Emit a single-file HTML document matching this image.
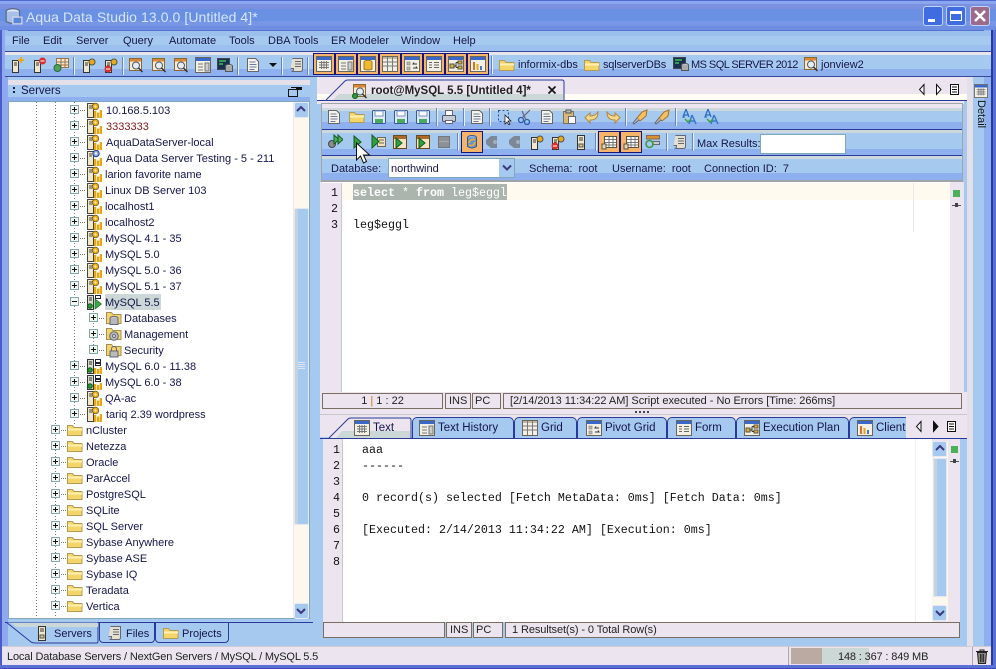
<!DOCTYPE html>
<html><head><meta charset="utf-8"><title>Aqua Data Studio</title>
<style>
html,body{margin:0;padding:0}
#w{position:relative;width:996px;height:669px;overflow:hidden;background:#a6c9ef;font:11px "Liberation Sans",sans-serif;color:#15154a}
#w div,#w svg,#w span{position:absolute}
.t{white-space:nowrap;line-height:16px;height:16px;margin-top:1px}
.b{left:0;height:1px}
.i{width:16px;height:16px}
.m{font:11.67px/16px "Liberation Mono",monospace;color:#111;white-space:pre;margin-top:1px}
.x{width:7px;height:7px;border:1px solid #7fa8a8;background:linear-gradient(#111,#111) center/5px 1px no-repeat,linear-gradient(#111,#111) center/1px 5px no-repeat,#f4f4f0}
.n{width:7px;height:7px;border:1px solid #7fa8a8;background:linear-gradient(#111,#111) center/5px 1px no-repeat,#f4f4f0}
.d{height:1px;width:5px;background:repeating-linear-gradient(90deg,#777 0 1px,transparent 1px 2px)}
.v{width:1px;background:repeating-linear-gradient(#777 0 1px,transparent 1px 3px)}
.s{width:1px;height:18px;background:#e8f0fa;border-left:1px solid #6a84b8}
.o{background:#f5b46a;border:1px solid #15157a;box-sizing:border-box;width:22px;height:22px}
.st{background:#ece5ef;border:1px solid #7a6e60;box-sizing:border-box;height:16px;line-height:14px;white-space:nowrap;color:#222;overflow:hidden}
.tab{height:21px;background:#a6c9ef;border:1px solid #2a3a98;border-bottom:0;border-radius:5px 5px 0 0;box-sizing:border-box;line-height:19px}
.sb{width:15px;height:16px;background:#a6c9ef;border:1px solid #e8e8f4;box-sizing:border-box;border-radius:2px;color:#3a3a7a}
</style></head><body>
<svg width="0" height="0" style="position:absolute"><defs>
<symbol id="srv" viewBox="0 0 16 16"><rect x="1.500" y="1.500" width="6" height="14" fill="#efe8cc" stroke="#444"/><path d="M3 4h3M3 6h3" stroke="#444"/><circle cx="9.500" cy="4.500" r="3.200" fill="#f0b020" stroke="#8a6818"/><circle cx="9.500" cy="4.500" r="1.100" fill="#fff6d0"/><path d="M8 9h2.300v7H8zM11 10.500h2.300V16H11zM13.700 8H16v8h-2.300z" fill="#eaa810"/></symbol>
<symbol id="srt" viewBox="0 0 16 16"><rect x="1.500" y="1.500" width="6" height="14" fill="#efe8cc" stroke="#444"/><path d="M3 4h3M3 6h3" stroke="#444"/><circle cx="10" cy="3.500" r="3.200" fill="#8aa8e0" stroke="#304080"/><circle cx="10" cy="3.500" r="1.100" fill="#fff"/><path d="M8 9h2.300v7H8zM11 10.500h2.300V16H11zM13.700 8H16v8h-2.300z" fill="#eaa810"/></symbol>
<symbol id="srn" viewBox="0 0 16 16"><rect x="1.500" y="1.500" width="6" height="14" fill="#d8dccc" stroke="#333"/><path d="M3 4h3M3 6h3" stroke="#333"/><circle cx="4" cy="12" r="2.300" fill="#2a9a3a" stroke="#145a20"/><rect x="9.500" y="1.500" width="5" height="3" fill="#fff" stroke="#223"/><rect x="9.500" y="5.500" width="5" height="2" fill="#fff" stroke="#223"/><path d="M8 10h2.300v6H8zM11 11h2.300v5H11zM13.700 9H16v7h-2.300z" fill="#eaa810"/></symbol>
<symbol id="sra" viewBox="0 0 16 16"><rect x="1.500" y="1.500" width="6" height="14" fill="#d8dccc" stroke="#333"/><path d="M3 4h3M3 6h3" stroke="#333"/><circle cx="4" cy="12" r="2.300" fill="#2a9a3a" stroke="#145a20"/><rect x="9.500" y="1.500" width="5" height="3" fill="#fff" stroke="#223"/><path d="M9 5v10l6.500-5z" fill="#3aa84a" stroke="#146a20" stroke-width=".7"/></symbol>
<symbol id="fol" viewBox="0 0 16 16"><path d="M.5 13.500V3.500h5l1.500 2h8v8z" fill="#f4d668" stroke="#b09a58"/><path d="M1 6.500h14v2H1z" fill="#fff0b0"/></symbol>
<symbol id="fdb" viewBox="0 0 16 16"><path d="M.5 13.500V2.500h5l1.500 2h8v9z" fill="#f4d668" stroke="#a09058"/><ellipse cx="8" cy="8" rx="4" ry="1.600" fill="#ccc" stroke="#667"/><path d="M4 8v6.500h8V8" fill="#b8b8bc" stroke="#667"/></symbol>
<symbol id="fgr" viewBox="0 0 16 16"><path d="M.5 13.500V2.500h5l1.500 2h8v9z" fill="#f4d668" stroke="#a09058"/><circle cx="8" cy="10" r="4.300" fill="#bbb" stroke="#667"/><circle cx="8" cy="10" r="1.500" fill="#eee" stroke="#667"/></symbol>
<symbol id="flk" viewBox="0 0 16 16"><path d="M.5 13.500V2.500h5l1.500 2h8v9z" fill="#f4d668" stroke="#a09058"/><path d="M5.500 9V7a2.500 2.500 0 0 1 5 0v2" fill="none" stroke="#667"/><rect x="4" y="9" width="8" height="6" fill="#bbb" stroke="#667"/></symbol>
<symbol id="win" viewBox="0 0 16 16"><rect x=".5" y=".5" width="15" height="15" fill="#f2efe4" stroke="#6a665c"/><path d="M1 1h14v3H1z" fill="#3a68c8"/><path d="M3 6.500h10M3 9h10M3 11.500h10M5.500 5v8M8 5v8M10.500 5v8" stroke="#77787c"/></symbol>
<symbol id="wi2" viewBox="0 0 16 16"><rect x=".5" y=".5" width="15" height="15" fill="#f2efe4" stroke="#6a665c"/><path d="M1 1h14v3H1z" fill="#3a68c8"/><path d="M3 7h5M3 10h5M3 13h5" stroke="#777"/><rect x="10" y="6" width="4" height="8" fill="#ccc" stroke="#777"/></symbol>
<symbol id="wic" viewBox="0 0 16 16"><rect x=".5" y=".5" width="15" height="15" fill="#f2efe4" stroke="#6a665c"/><path d="M1 1h14v3H1z" fill="#3a68c8"/><ellipse cx="8" cy="6" rx="4" ry="1.600" fill="#f4c848" stroke="#a07818"/><path d="M4 6v7q4 2 8 0V6" fill="#eeb830" stroke="#a07818"/></symbol>
<symbol id="wig" viewBox="0 0 16 16"><rect x=".5" y=".5" width="15" height="15" fill="#f2efe4" stroke="#6a665c"/><path d="M1 1h14v2H1z" fill="#c0b8a0"/><path d="M1 6h14M1 10h14M5.500 1v14M10.500 1v14" stroke="#77787c"/></symbol>
<symbol id="wip" viewBox="0 0 16 16"><rect x=".5" y=".5" width="15" height="15" fill="#f2efe4" stroke="#6a665c"/><path d="M1 1h14v3H1z" fill="#3a68c8"/><path d="M3 6h3v3H3zM3 11h3v3H3z" fill="#bbb" stroke="#777" stroke-width=".6"/><path d="M9 12h4l-1-1.500M13 8H9l1-1.500" fill="none" stroke="#334"/></symbol>
<symbol id="wif" viewBox="0 0 16 16"><rect x=".5" y=".5" width="15" height="15" fill="#f2efe4" stroke="#6a665c"/><path d="M1 1h14v3H1z" fill="#3a68c8"/><path d="M3 6.500h3M8 6.500h5M3 9h3M8 9h5M3 11.500h3M8 11.500h5" stroke="#666"/></symbol>
<symbol id="wie" viewBox="0 0 16 16"><rect x=".5" y=".5" width="15" height="15" fill="#f2efe4" stroke="#6a665c"/><path d="M1 1h14v3H1z" fill="#3a68c8"/><path d="M2 8h4v4H2zM10 5h4v3h-4zM10 10h4v3h-4z" fill="#dcb040" stroke="#554"/><path d="M6 10h2M8 6.500v5M8 6.500h2M8 11.500h2" stroke="#333"/></symbol>
<symbol id="wib" viewBox="0 0 16 16"><rect x=".5" y=".5" width="15" height="15" fill="#f2efe4" stroke="#6a665c"/><path d="M1 1h14v3H1z" fill="#3a68c8"/><path d="M3 6h2v8H3z" fill="#d87028"/><path d="M6.500 8h2v6h-2z" fill="#e0a820"/><path d="M10 10h2v4h-2z" fill="#4a78c0"/></symbol>
<symbol id="qry" viewBox="0 0 16 16"><rect x="1.500" y="1.500" width="12" height="12" fill="#f4ecd8" stroke="#8a6a30"/><path d="M2 2h11v2.500H2z" fill="#d88838"/><circle cx="8" cy="8.500" r="3.500" fill="#e4eef4" stroke="#556"/><path d="M10.500 11l4 4" stroke="#333" stroke-width="1.500"/></symbol>
<symbol id="qrg" viewBox="0 0 16 16"><use href="#qry"/><circle cx="3" cy="13" r="2.500" fill="#2a9a3a" stroke="#145a20"/></symbol>
<symbol id="tow" viewBox="0 0 16 16"><rect x="4.500" y="1.500" width="7" height="14" fill="#efe8cc" stroke="#333"/><path d="M6 4h4M6 6h4" stroke="#333"/><rect x="6" y="10" width="4" height="3" fill="#d8c890" stroke="#555"/></symbol>
<symbol id="tpl" viewBox="0 0 16 16"><rect x="3.500" y="3.500" width="6" height="12" fill="#efe8cc" stroke="#333"/><path d="M5 6h3M5 8h3" stroke="#333"/><path d="M12 0v6M9 3h6" stroke="#e8a820" stroke-width="2"/></symbol>
<symbol id="tmn" viewBox="0 0 16 16"><rect x="3.500" y="3.500" width="6" height="12" fill="#efe8cc" stroke="#333"/><path d="M5 6h3M5 8h3" stroke="#333"/><circle cx="11.500" cy="4" r="3.500" fill="#d83030"/><path d="M9.500 4h4" stroke="#fff"/></symbol>
<symbol id="tgd" viewBox="0 0 16 16"><rect x="3.500" y="1.500" width="12" height="9" fill="#f4ecd8" stroke="#a07040"/><path d="M4 5h11M4 8h11M8 2v8M12 2v8" stroke="#a07040"/><circle cx="4.500" cy="11" r="3.500" fill="#50a060" stroke="#2a6a3a"/></symbol>
<symbol id="tgr" viewBox="0 0 16 16"><rect x="2.500" y="3.500" width="6" height="12" fill="#efe8cc" stroke="#333"/><path d="M4 6h3M4 8h3" stroke="#333"/><circle cx="11" cy="5" r="3" fill="#e8a820" stroke="#554"/></symbol>
<symbol id="trd" viewBox="0 0 16 16"><use href="#tgr"/><circle cx="5" cy="12" r="3.500" fill="#d83030"/><path d="M3 12h4" stroke="#fff"/></symbol>
<symbol id="dbs" viewBox="0 0 16 16"><rect x=".5" y="1.500" width="12" height="11" fill="#1a3050" stroke="#445"/><path d="M2 4h7M2 7h4" stroke="#3ac050" stroke-width="1.500"/><ellipse cx="12" cy="9" rx="3.500" ry="1.500" fill="#ccc" stroke="#555"/><path d="M8.500 9v5.500h7V9" fill="#aaa" stroke="#555"/></symbol>
<symbol id="doc" viewBox="0 0 16 16"><path d="M2.500 1.500h8l3 3v10h-11z" fill="#f6f4ea" stroke="#666"/><path d="M4.500 5h6M4.500 7.500h7M4.500 10h7M4.500 12.500h5" stroke="#6a7a9a"/></symbol>
<symbol id="scr" viewBox="0 0 16 16"><path d="M3.500 1.500h10v11q0 2-2 2h-9q2 0 2-2v-1h-3" fill="#e4e0d0" stroke="#667"/><path d="M6 4.500h6M6 7h6M6 9.500h6" stroke="#667"/></symbol>
<symbol id="sav" viewBox="0 0 16 16"><rect x="1.500" y="1.500" width="13" height="13" rx="1" fill="#dfe8f6" stroke="#345a9a"/><rect x="4" y="2" width="8" height="5" fill="#fff" stroke="#7a94c0"/><rect x="4" y="10" width="8" height="4" fill="#4aa860"/></symbol>
<symbol id="pr" viewBox="0 0 16 16"><rect x="4.500" y="1.500" width="7" height="5" fill="#fff" stroke="#667"/><rect x="1.500" y="6.500" width="13" height="6" rx="1" fill="#c4ccd8" stroke="#556"/><rect x="4.500" y="11.500" width="7" height="3" fill="#fff" stroke="#667"/></symbol>
<symbol id="cut" viewBox="0 0 16 16"><circle cx="4" cy="11" r="2.500" fill="none" stroke="#2a5aa8" stroke-width="1.300"/><circle cx="10" cy="13" r="2.500" fill="none" stroke="#2a5aa8" stroke-width="1.300"/><path d="M5 9L13 1M9 11L5 2" stroke="#667" stroke-width="1.200"/></symbol>
<symbol id="pst" viewBox="0 0 16 16"><rect x="2.500" y="2.500" width="10" height="12" fill="#d8b878" stroke="#775"/><rect x="5" y="1" width="5" height="3" fill="#bbb" stroke="#555"/><rect x="7.500" y="7.500" width="7" height="7" fill="#fff" stroke="#667"/></symbol>
<symbol id="und" viewBox="0 0 16 16"><path d="M14 3c0 7-4 8-8 8V14L1 8.500 6 4v3c3 0 6-1 8-4z" fill="#f4d890" stroke="#b08838"/></symbol>
<symbol id="red" viewBox="0 0 16 16"><path d="M2 3c0 7 4 8 8 8V14l5-5.500L10 4v3C7 7 4 6 2 3z" fill="#f4d890" stroke="#b08838"/></symbol>
<symbol id="brs" viewBox="0 0 16 16"><path d="M15 1l-5 2-5 6 3 3 6-5z" fill="#f4c060" stroke="#a07030"/><path d="M5 9l-4 5 1 1 5-4" fill="#b8bcc0" stroke="#667"/></symbol>
<symbol id="fnt" viewBox="0 0 16 16"><path d="M4 0L1 8h2M4 0l3 8M2 6h4" fill="none" stroke="#2a6ac0" stroke-width="1.200"/><path d="M10 6l-3 9M10 6l4 9M8 12h5" fill="none" stroke="#3a78c8" stroke-width="1.500"/><path d="M3 10l3 3 3-3" fill="none" stroke="#3aa04a" stroke-width="1.500"/></symbol>
<symbol id="run" viewBox="0 0 16 16"><path d="M5 2v12l7-6z" fill="#30a040" stroke="#145a20"/></symbol>
<symbol id="rgr" viewBox="0 0 16 16"><circle cx="5" cy="10" r="3.500" fill="#8a8f8a" stroke="#445"/><path d="M7 1v9l5-4.500z" fill="#4ab060" stroke="#145a20"/><path d="M11 1v9l5-4.500z" fill="#4ab060" stroke="#145a20"/></symbol>
<symbol id="rpl" viewBox="0 0 16 16"><rect x="6.500" y="3.500" width="8" height="9" fill="#f4e4b0" stroke="#666"/><path d="M8 6h5M8 9h5" stroke="#666"/><path d="M1 1v13l7-6.500z" fill="#30a040" stroke="#145a20"/></symbol>
<symbol id="rgd" viewBox="0 0 16 16"><rect x="1.500" y="1.500" width="13" height="13" fill="#f4e4c0" stroke="#6a4a20"/><path d="M2 2h12v3H2z" fill="#b06a28"/><path d="M4 4v10l6-5z" fill="#30a040" stroke="#145a20"/></symbol>
<symbol id="stp" viewBox="0 0 16 16"><rect x="2.500" y="2.500" width="11" height="11" fill="#8c9098" stroke="#777"/><path d="M3 7.500h10" stroke="#aaa"/></symbol>
<symbol id="orf" viewBox="0 0 16 16"><ellipse cx="8" cy="3.500" rx="4.500" ry="2" fill="#9cb8e4" stroke="#345a9a"/><path d="M3.500 3.500v9q4.500 3 9 0v-9" fill="#6a94d0" stroke="#345a9a"/><path d="M5 9a4 4 0 0 1 6-3M11 8a4 4 0 0 1-6 3" fill="none" stroke="#f0b020" stroke-width="1.500"/></symbol>
<symbol id="gry" viewBox="0 0 16 16"><path d="M6 2h6v12H6l-5-4V6z" fill="#7c8898"/><circle cx="10" cy="8" r="2" fill="#a4aebc"/></symbol>
<symbol id="tbl" viewBox="0 0 16 16"><rect x="3.500" y="2.500" width="12" height="11" fill="#fff" stroke="#554"/><path d="M4 5.500h11M4 8.500h11M4 11h11M8 3v10M12 3v10" stroke="#777"/><path d="M1 10h4v5H1z" fill="#e8d8a8" stroke="#554"/></symbol>
<symbol id="pac" viewBox="0 0 16 16"><rect x="1.500" y="1.500" width="13" height="3.500" fill="#d8922c" stroke="#865"/><rect x="7.500" y="7.500" width="7" height="3" fill="#ccc" stroke="#667"/><circle cx="4.500" cy="10" r="3.500" fill="none" stroke="#3a9a4a" stroke-width="1.600"/></symbol>
</defs></svg>
<div id="w">
<!-- title -->
<div style="left:0;top:0;width:996px;height:31px;background:linear-gradient(#5068d0 0 1px,#8aa6ee 1px 4px,#7c90e0 4px 9px,#6a90e4 9px 21px,#7796e6 21px 26px,#6e8ee2 26px 30px,#5570d0 30px)"></div>
<svg class="i" style="left:5px;top:7px;width:18px;height:18px" viewBox="0 0 16 16"><ellipse cx="7" cy="4" rx="6" ry="2.500" fill="#dfe8f8" stroke="#567"/><path d="M1 4v9q6 3 12 0V4" fill="#a8c0e8" stroke="#567"/><rect x="7" y="9" width="8" height="6" fill="#5a88d8" stroke="#dde"/></svg>
<div class="t" style="left:26px;top:8px;font-size:14px;letter-spacing:.08px;color:#d8e6fa">Aqua Data Studio 13.0.0 [Untitled 4]*</div>
<div style="left:923px;top:6px;width:20px;height:20px;background:#3f6ce0;border:1px solid #c0d4f6;box-sizing:border-box;border-radius:3px"></div><div style="left:928px;top:19px;width:7px;height:3px;background:#fff"></div>
<div style="left:946px;top:6px;width:20px;height:20px;background:#3f6ce0;border:1px solid #c0d4f6;box-sizing:border-box;border-radius:3px"></div><div style="left:950px;top:11px;width:12px;height:10px;border:1px solid #fff;border-top-width:3px;box-sizing:border-box"></div>
<div style="left:970px;top:6px;width:20px;height:20px;background:#9c6a8c;border:1px solid #c0d4f6;box-sizing:border-box;border-radius:3px"></div>
<svg style="left:972px;top:8px;width:16px;height:16px" viewBox="0 0 16 16"><path d="M3 3l10 10M13 3L3 13" stroke="#fff" stroke-width="2.500"/></svg>
<!-- window edges -->
<div style="left:0;top:30px;width:8px;height:639px;background:linear-gradient(90deg,#4a5cc8 0 2px,#8fa8ee 2px)"></div>
<div style="left:967px;top:77px;width:6px;height:570px;background:#e4e0ea"></div>
<div style="left:984px;top:30px;width:7px;height:620px;background:#8fb0ee"></div>
<div style="left:991px;top:30px;width:5px;height:639px;background:linear-gradient(90deg,#2a3aa0 0 2px,#5a70d4 2px)"></div>
<!-- menu -->
<div style="left:5px;top:31px;width:986px;height:20px;background:linear-gradient(#9cc0ee 0 5px,#a6c9ef 5px 14px,#9cc0ee 14px)"></div>
<div style="left:5px;top:51px;width:986px;height:1px;background:#38489c"></div>
<div style="left:5px;top:52px;width:986px;height:3px;background:#e8e4ec"></div>
<div style="left:5px;top:55px;width:986px;height:21px;background:linear-gradient(#a6c9ef 0 14px,#8fb0ee 14px)"></div>
<div style="left:5px;top:76px;width:986px;height:1px;background:#38489c"></div>
<div class="t" style="left:12px;top:32px">File</div><div class="t" style="left:43px;top:32px">Edit</div><div class="t" style="left:76px;top:32px">Server</div><div class="t" style="left:123px;top:32px">Query</div><div class="t" style="left:169px;top:32px">Automate</div><div class="t" style="left:229px;top:32px">Tools</div><div class="t" style="left:268px;top:32px">DBA Tools</div><div class="t" style="left:331px;top:32px">ER Modeler</div><div class="t" style="left:401px;top:32px">Window</div><div class="t" style="left:453px;top:32px">Help</div>
<!-- main toolbar -->
<svg class="i" style="left:9px;top:57px"><use href="#tpl"/></svg><svg class="i" style="left:31px;top:57px"><use href="#tmn"/></svg><svg class="i" style="left:53px;top:57px"><use href="#tgd"/></svg>
<div class="s" style="left:73px;top:57px"></div>
<svg class="i" style="left:81px;top:57px"><use href="#tgr"/></svg><svg class="i" style="left:103px;top:57px"><use href="#trd"/></svg>
<div class="s" style="left:122px;top:57px"></div>
<svg class="i" style="left:128px;top:57px"><use href="#qry"/></svg><svg class="i" style="left:151px;top:57px"><use href="#qry"/></svg><svg class="i" style="left:173px;top:57px"><use href="#qry"/></svg><svg class="i" style="left:195px;top:57px"><use href="#wi2"/></svg><svg class="i" style="left:217px;top:57px"><use href="#dbs"/></svg>
<div class="s" style="left:237px;top:57px"></div>
<svg class="i" style="left:245px;top:57px"><use href="#doc"/></svg>
<div style="left:269px;top:63px;width:0;height:0;border:4px solid transparent;border-top:4px solid #111"></div>
<div class="s" style="left:281px;top:57px"></div>
<svg class="i" style="left:289px;top:57px"><use href="#scr"/></svg>
<div class="s" style="left:307px;top:57px"></div>
<div class="o" style="left:313px;top:53px"></div><div class="o" style="left:335px;top:53px"></div><div class="o" style="left:357px;top:53px"></div><div class="o" style="left:379px;top:53px"></div><div class="o" style="left:401px;top:53px"></div><div class="o" style="left:423px;top:53px"></div><div class="o" style="left:445px;top:53px"></div><div class="o" style="left:467px;top:53px"></div>
<svg class="i" style="left:316px;top:56px"><use href="#win"/></svg><svg class="i" style="left:338px;top:56px"><use href="#wi2"/></svg><svg class="i" style="left:360px;top:56px"><use href="#wic"/></svg><svg class="i" style="left:382px;top:56px"><use href="#wig"/></svg><svg class="i" style="left:404px;top:56px"><use href="#wip"/></svg><svg class="i" style="left:426px;top:56px"><use href="#wif"/></svg><svg class="i" style="left:448px;top:56px"><use href="#wie"/></svg><svg class="i" style="left:470px;top:56px"><use href="#wib"/></svg>
<div class="s" style="left:491px;top:56px"></div>
<svg class="i" style="left:499px;top:57px"><use href="#fol"/></svg><div class="t" style="left:518px;top:56px">informix-dbs</div>
<svg class="i" style="left:584px;top:57px"><use href="#fol"/></svg><div class="t" style="left:603px;top:56px;letter-spacing:-.2px">sqlserverDBs</div>
<svg class="i" style="left:673px;top:56px"><use href="#dbs"/></svg><div class="t" style="left:691px;top:56px;letter-spacing:-.55px">MS SQL SERVER 2012</div>
<svg class="i" style="left:803px;top:56px"><use href="#qry"/></svg><div class="t" style="left:821px;top:56px">jonview2</div>
<!-- left panel -->
<div style="left:8px;top:80px;width:302px;height:5px;background:#e4e0ea"></div>
<div style="left:8px;top:85px;width:302px;height:12px;background:#a6c9ef"></div>
<div style="left:8px;top:97px;width:302px;height:4px;background:#8fb0ee"></div>
<div style="left:13px;top:87px;width:2px;height:2px;background:#223;box-shadow:0 4px 0 #223"></div>
<div class="t" style="left:21px;top:82px;font-size:11.500px">Servers</div>
<div style="left:288px;top:89px;width:8px;height:6px;border:1px solid #111"></div><div style="left:291px;top:87px;width:6px;height:1px;background:#111;box-shadow:5px 0 0 #111,5px 1px 0 #111,5px 2px 0 #111"></div>
<div style="left:8px;top:101px;width:302px;height:518px;background:#fff;border:1px solid #7fa8b8;box-sizing:border-box;overflow:hidden" id="tree"></div>
<div style="left:293px;top:102px;width:15px;height:516px;background:#fdf8ee;border-left:1px solid #ece8ec;box-sizing:border-box"></div>
<div class="sb" style="left:294px;top:102px"></div><svg style="left:296px;top:105px;width:10px;height:8px" viewBox="0 0 10 8"><path d="M1 6l4-4 4 4" fill="none" stroke="#3a3a7a" stroke-width="2"/></svg>
<div style="left:294px;top:208px;width:15px;height:317px;background:linear-gradient(90deg,#c4d4dc 0 3px,#a6c9ef 3px);border:1px solid #e4e6f2;box-sizing:border-box;border-radius:2px"></div>
<div style="left:298px;top:362px;width:7px;height:1px;background:#dce4f4;box-shadow:0 2px 0 #dce4f4,0 4px 0 #dce4f4,0 6px 0 #dce4f4"></div>
<div class="sb" style="left:294px;top:603px"></div><svg style="left:296px;top:607px;width:10px;height:8px" viewBox="0 0 10 8"><path d="M1 2l4 4 4-4" fill="none" stroke="#3a3a7a" stroke-width="2"/></svg>
<!-- tree lines -->
<div class="v" style="left:36px;top:102px;height:516px"></div><div class="v" style="left:55px;top:102px;height:516px"></div><div class="v" style="left:74px;top:102px;height:322px"></div><div class="v" style="left:93px;top:308px;height:44px"></div>
<!-- tree rows level 2 -->
<div class="x" style="left:70px;top:105px"></div><div class="d" style="left:80px;top:110px"></div><svg class="i" style="left:86px;top:102px"><use href="#srv"/></svg><div class="t" style="left:106px;top:102px">10.168.5.103</div>
<div class="x" style="left:70px;top:121px"></div><div class="d" style="left:80px;top:126px"></div><svg class="i" style="left:86px;top:118px"><use href="#srv"/></svg><div class="t" style="left:106px;top:118px;color:#7a1a1a">3333333</div>
<div class="x" style="left:70px;top:137px"></div><div class="d" style="left:80px;top:142px"></div><svg class="i" style="left:86px;top:134px"><use href="#srv"/></svg><div class="t" style="left:106px;top:134px">AquaDataServer-local</div>
<div class="x" style="left:70px;top:153px"></div><div class="d" style="left:80px;top:158px"></div><svg class="i" style="left:86px;top:150px"><use href="#srt"/></svg><div class="t" style="left:106px;top:150px">Aqua Data Server Testing - 5 - 211</div>
<div class="x" style="left:70px;top:169px"></div><div class="d" style="left:80px;top:174px"></div><svg class="i" style="left:86px;top:166px"><use href="#srv"/></svg><div class="t" style="left:105px;top:166px">larion favorite name</div>
<div class="x" style="left:70px;top:185px"></div><div class="d" style="left:80px;top:190px"></div><svg class="i" style="left:86px;top:182px"><use href="#srv"/></svg><div class="t" style="left:105px;top:182px">Linux DB Server 103</div>
<div class="x" style="left:70px;top:201px"></div><div class="d" style="left:80px;top:206px"></div><svg class="i" style="left:86px;top:198px"><use href="#srv"/></svg><div class="t" style="left:105px;top:198px">localhost1</div>
<div class="x" style="left:70px;top:217px"></div><div class="d" style="left:80px;top:222px"></div><svg class="i" style="left:86px;top:214px"><use href="#srv"/></svg><div class="t" style="left:105px;top:214px">localhost2</div>
<div class="x" style="left:70px;top:233px"></div><div class="d" style="left:80px;top:238px"></div><svg class="i" style="left:86px;top:230px"><use href="#srv"/></svg><div class="t" style="left:105px;top:230px">MySQL 4.1 - 35</div>
<div class="x" style="left:70px;top:249px"></div><div class="d" style="left:80px;top:254px"></div><svg class="i" style="left:86px;top:246px"><use href="#srv"/></svg><div class="t" style="left:105px;top:246px">MySQL 5.0</div>
<div class="x" style="left:70px;top:265px"></div><div class="d" style="left:80px;top:270px"></div><svg class="i" style="left:86px;top:262px"><use href="#srv"/></svg><div class="t" style="left:105px;top:262px">MySQL 5.0 - 36</div>
<div class="x" style="left:70px;top:281px"></div><div class="d" style="left:80px;top:286px"></div><svg class="i" style="left:86px;top:278px"><use href="#srv"/></svg><div class="t" style="left:105px;top:278px">MySQL 5.1 - 37</div>
<div class="n" style="left:70px;top:297px"></div><div class="d" style="left:80px;top:302px"></div><svg class="i" style="left:86px;top:294px"><use href="#sra"/></svg><div style="left:105px;top:294px;width:56px;height:16px;background:#ccd8d8"></div><div class="t" style="left:105px;top:294px">MySQL 5.5</div>
<div class="x" style="left:89px;top:313px"></div><div class="d" style="left:99px;top:318px"></div><svg class="i" style="left:106px;top:310px"><use href="#fdb"/></svg><div class="t" style="left:124px;top:310px">Databases</div>
<div class="x" style="left:89px;top:329px"></div><div class="d" style="left:99px;top:334px"></div><svg class="i" style="left:106px;top:326px"><use href="#fgr"/></svg><div class="t" style="left:124px;top:326px">Management</div>
<div class="x" style="left:89px;top:345px"></div><div class="d" style="left:99px;top:350px"></div><svg class="i" style="left:106px;top:342px"><use href="#flk"/></svg><div class="t" style="left:124px;top:342px">Security</div>
<div class="x" style="left:70px;top:361px"></div><div class="d" style="left:80px;top:366px"></div><svg class="i" style="left:86px;top:358px"><use href="#srn"/></svg><div class="t" style="left:105px;top:358px">MySQL 6.0 - 11.38</div>
<div class="x" style="left:70px;top:377px"></div><div class="d" style="left:80px;top:382px"></div><svg class="i" style="left:86px;top:374px"><use href="#srn"/></svg><div class="t" style="left:105px;top:374px">MySQL 6.0 - 38</div>
<div class="x" style="left:70px;top:393px"></div><div class="d" style="left:80px;top:398px"></div><svg class="i" style="left:86px;top:390px"><use href="#srv"/></svg><div class="t" style="left:105px;top:390px">QA-ac</div>
<div class="x" style="left:70px;top:409px"></div><div class="d" style="left:80px;top:414px"></div><svg class="i" style="left:86px;top:406px"><use href="#srv"/></svg><div class="t" style="left:106px;top:406px">tariq 2.39 wordpress</div>
<!-- tree rows level 1 -->
<div class="x" style="left:51px;top:425px"></div><div class="d" style="left:61px;top:430px"></div><svg class="i" style="left:67px;top:422px"><use href="#fol"/></svg><div class="t" style="left:86px;top:422px">nCluster</div>
<div class="x" style="left:51px;top:441px"></div><div class="d" style="left:61px;top:446px"></div><svg class="i" style="left:67px;top:438px"><use href="#fol"/></svg><div class="t" style="left:86px;top:438px">Netezza</div>
<div class="x" style="left:51px;top:457px"></div><div class="d" style="left:61px;top:462px"></div><svg class="i" style="left:67px;top:454px"><use href="#fol"/></svg><div class="t" style="left:86px;top:454px">Oracle</div>
<div class="x" style="left:51px;top:473px"></div><div class="d" style="left:61px;top:478px"></div><svg class="i" style="left:67px;top:470px"><use href="#fol"/></svg><div class="t" style="left:86px;top:470px">ParAccel</div>
<div class="x" style="left:51px;top:489px"></div><div class="d" style="left:61px;top:494px"></div><svg class="i" style="left:67px;top:486px"><use href="#fol"/></svg><div class="t" style="left:86px;top:486px">PostgreSQL</div>
<div class="x" style="left:51px;top:505px"></div><div class="d" style="left:61px;top:510px"></div><svg class="i" style="left:67px;top:502px"><use href="#fol"/></svg><div class="t" style="left:86px;top:502px">SQLite</div>
<div class="x" style="left:51px;top:521px"></div><div class="d" style="left:61px;top:526px"></div><svg class="i" style="left:67px;top:518px"><use href="#fol"/></svg><div class="t" style="left:86px;top:518px">SQL Server</div>
<div class="x" style="left:51px;top:537px"></div><div class="d" style="left:61px;top:542px"></div><svg class="i" style="left:67px;top:534px"><use href="#fol"/></svg><div class="t" style="left:86px;top:534px">Sybase Anywhere</div>
<div class="x" style="left:51px;top:553px"></div><div class="d" style="left:61px;top:558px"></div><svg class="i" style="left:67px;top:550px"><use href="#fol"/></svg><div class="t" style="left:86px;top:550px">Sybase ASE</div>
<div class="x" style="left:51px;top:569px"></div><div class="d" style="left:61px;top:574px"></div><svg class="i" style="left:67px;top:566px"><use href="#fol"/></svg><div class="t" style="left:86px;top:566px">Sybase IQ</div>
<div class="x" style="left:51px;top:585px"></div><div class="d" style="left:61px;top:590px"></div><svg class="i" style="left:67px;top:582px"><use href="#fol"/></svg><div class="t" style="left:86px;top:582px">Teradata</div>
<div class="x" style="left:51px;top:601px"></div><div class="d" style="left:61px;top:606px"></div><svg class="i" style="left:67px;top:598px"><use href="#fol"/></svg><div class="t" style="left:86px;top:598px">Vertica</div>
<!-- left bottom tabs -->
<div style="left:8px;top:619px;width:305px;height:27px;background:#a6c9ef"></div>
<div style="left:5px;top:622px;width:308px;height:1px;background:#2a3a98"></div>
<svg style="left:5px;top:622px;width:94px;height:22px" viewBox="0 0 94 22"><path d="M1 0L26 20q2 1 4 1h62q1 0 1-2V0z" fill="#a6c9ef" stroke="#2a3a98"/><path d="M6 1h87v4H12z" fill="#ccd8d8"/></svg>
<svg class="i" style="left:34px;top:625px"><use href="#tow"/></svg><div class="t" style="left:54px;top:625px">Servers</div>
<div style="left:99px;top:623px;width:56px;height:20px;background:#a6c9ef;border:1px solid #2a3a98;border-top:0;border-radius:0 0 4px 4px;box-sizing:border-box"></div>
<svg class="i" style="left:107px;top:625px"><use href="#scr"/></svg><div class="t" style="left:126px;top:625px">Files</div>
<div style="left:155px;top:623px;width:74px;height:20px;background:#a6c9ef;border:1px solid #2a3a98;border-top:0;border-radius:0 0 4px 4px;box-sizing:border-box"></div>
<svg class="i" style="left:163px;top:625px"><use href="#fol"/></svg><div class="t" style="left:182px;top:625px">Projects</div>
<!-- right pane -->
<div style="left:317px;top:77px;width:650px;height:17px;background:#ece5ef"></div>
<div style="left:317px;top:94px;width:650px;height:6px;background:#fffdf4"></div>
<div style="left:317px;top:100px;width:650px;height:1px;background:#2a3a98"></div>
<div style="left:317px;top:101px;width:650px;height:3px;background:#ece5ef"></div>
<svg style="left:325px;top:79px;width:241px;height:22px" viewBox="0 0 241 22"><path d="M1 21L20 2q1-1 3-1h214q2 0 2 2v18" fill="#ece5ef" stroke="#2a3a98"/><path d="M14 15h224v6H8z" fill="#ccd8d8"/></svg>
<svg class="i" style="left:352px;top:83px"><use href="#qrg"/></svg>
<div class="t" style="left:371px;top:82px;font-weight:bold;font-size:11.500px;color:#222">root@MySQL 5.5 [Untitled 4]*</div>
<svg style="left:547px;top:85px;width:10px;height:10px" viewBox="0 0 10 10"><path d="M1.500 1.500l7 7M8.500 1.500l-7 7" stroke="#111" stroke-width="1.600"/></svg>
<svg style="left:918px;top:83px;width:46px;height:13px" viewBox="0 0 46 13"><path d="M6 1.500L1.500 6.500 6 11.500zM18.500 1.500L23 6.500 18.500 11.500z" fill="#fff" stroke="#111"/><rect x="32.500" y="1.500" width="8" height="10" fill="#fff" stroke="#111"/><path d="M34 4h5M34 6.500h5M34 9h5" stroke="#111"/></svg>
<!-- editor toolbars -->
<div style="left:321px;top:103px;width:642px;height:79px;background:#8fb0ee;border:1px solid #a0a4a8;border-bottom-width:2px;box-sizing:border-box"></div>
<div style="left:322px;top:104px;width:640px;height:25px;background:linear-gradient(#ece5ef 0 4px,#ccd8dc 4px 7px,#a6c9ef 7px 18px,#8fb0ee 18px)"></div>
<div style="left:322px;top:129px;width:640px;height:1px;background:#2a3a98"></div>
<div style="left:322px;top:130px;width:640px;height:25px;background:linear-gradient(#ccd8dc 0 3px,#a6c9ef 3px 19px,#8fb0ee 19px)"></div>
<div style="left:322px;top:155px;width:640px;height:1px;background:#2a3a98"></div>
<div style="left:322px;top:156px;width:640px;height:24px;background:linear-gradient(#ccd8dc 0 3px,#a6c9ef 3px 17px,#8fb0ee 17px)"></div>
<svg class="i" style="left:326px;top:109px"><use href="#doc"/></svg><svg class="i" style="left:349px;top:109px"><use href="#fol"/></svg><svg class="i" style="left:371px;top:109px"><use href="#sav"/></svg><svg class="i" style="left:393px;top:109px"><use href="#sav"/></svg><svg class="i" style="left:415px;top:109px"><use href="#sav"/></svg>
<div class="s" style="left:436px;top:108px"></div>
<svg class="i" style="left:441px;top:109px"><use href="#pr"/></svg>
<div class="s" style="left:463px;top:108px"></div>
<svg class="i" style="left:469px;top:109px"><use href="#doc"/></svg>
<div class="s" style="left:489px;top:108px"></div>
<svg style="left:497px;top:109px;width:16px;height:16px" viewBox="0 0 16 16"><rect x="1.500" y="1.500" width="10" height="11" fill="none" stroke="#2a4a9a" stroke-dasharray="2 2"/><path d="M8 6v9l2-2 2 3 1-1-2-3h3z" fill="#fff" stroke="#111" stroke-width=".7"/></svg>
<svg class="i" style="left:517px;top:109px"><use href="#cut"/></svg><svg class="i" style="left:539px;top:109px"><use href="#doc"/></svg><svg class="i" style="left:561px;top:109px"><use href="#pst"/></svg><svg class="i" style="left:584px;top:109px"><use href="#und"/></svg><svg class="i" style="left:605px;top:109px"><use href="#red"/></svg>
<div class="s" style="left:625px;top:108px"></div>
<svg class="i" style="left:632px;top:109px"><use href="#brs"/></svg><svg class="i" style="left:654px;top:109px"><use href="#brs"/></svg>
<div class="s" style="left:675px;top:108px"></div>
<svg class="i" style="left:682px;top:109px"><use href="#fnt"/></svg><svg class="i" style="left:704px;top:109px"><use href="#fnt"/></svg>
<svg class="i" style="left:327px;top:134px"><use href="#rgr"/></svg><svg class="i" style="left:349px;top:134px"><use href="#run"/></svg><svg class="i" style="left:371px;top:134px"><use href="#rpl"/></svg><svg class="i" style="left:392px;top:134px"><use href="#rgd"/></svg><svg class="i" style="left:415px;top:134px"><use href="#rgd"/></svg><svg class="i" style="left:436px;top:134px"><use href="#stp"/></svg>
<div class="s" style="left:457px;top:133px"></div>
<div class="o" style="left:461px;top:131px"></div><svg class="i" style="left:464px;top:134px"><use href="#orf"/></svg>
<svg class="i" style="left:485px;top:134px"><use href="#gry"/></svg><svg class="i" style="left:508px;top:134px"><use href="#gry"/></svg><svg class="i" style="left:529px;top:134px"><use href="#tgr"/></svg><svg class="i" style="left:550px;top:134px"><use href="#trd"/></svg><svg class="i" style="left:573px;top:134px"><use href="#tow"/></svg>
<div class="s" style="left:595px;top:133px"></div>
<div class="o" style="left:598px;top:131px"></div><div class="o" style="left:620px;top:131px"></div><svg class="i" style="left:601px;top:134px"><use href="#tbl"/></svg><svg class="i" style="left:623px;top:134px"><use href="#tbl"/></svg>
<svg class="i" style="left:645px;top:134px"><use href="#pac"/></svg>
<div class="s" style="left:666px;top:133px"></div>
<svg class="i" style="left:672px;top:134px"><use href="#scr"/></svg>
<div class="s" style="left:692px;top:133px"></div>
<div class="t" style="left:697px;top:135px">Max Results:</div>
<div style="left:760px;top:134px;width:86px;height:20px;background:#fff;border:1px solid #7fa8b8;box-sizing:border-box"></div>
<div class="t" style="left:331px;top:160px">Database:</div>
<div style="left:388px;top:158px;width:127px;height:20px;background:#fff;border:1px solid #7fa8b8;box-sizing:border-box"></div>
<div class="t" style="left:391px;top:160px">northwind</div>
<div style="left:499px;top:159px;width:15px;height:18px;background:#a6c9ef"></div>
<svg style="left:502px;top:164px;width:10px;height:8px" viewBox="0 0 10 8"><path d="M1 1.500l4 4 4-4" fill="none" stroke="#3a3a7a" stroke-width="2"/></svg>
<div class="t" style="left:529px;top:160px">Schema:&nbsp; root</div><div class="t" style="left:612px;top:160px">Username:&nbsp; root</div><div class="t" style="left:704px;top:160px">Connection ID:&nbsp; 7</div>
<!-- editor -->
<div style="left:320px;top:182px;width:647px;height:210px;background:#fff"></div>
<div style="left:320px;top:182px;width:2px;height:210px;background:#ece5ef"></div>
<div style="left:322px;top:183px;width:19px;height:209px;background:#ece5ef"></div>
<div style="left:341px;top:183px;width:1px;height:209px;background:#c8c8cc"></div>
<div style="left:342px;top:183px;width:608px;height:17px;background:#fffaf0"></div>
<div style="left:913px;top:183px;width:1px;height:49px;background:#e8e8e8"></div>
<div style="left:950px;top:182px;width:14px;height:210px;background:#ece5ef"></div>
<div style="left:964px;top:101px;width:3px;height:546px;background:#a6c9ef"></div>
<div style="left:953px;top:190px;width:7px;height:7px;background:#4caf5a"></div>
<div style="left:952px;top:205px;width:9px;height:1px;background:#555"></div><div style="left:955px;top:203px;width:3px;height:4px;background:#444"></div>
<div class="m" style="left:331px;top:184px">1</div><div class="m" style="left:331px;top:200px">2</div><div class="m" style="left:331px;top:216px">3</div>
<div style="left:353px;top:184px;width:154px;height:16px;background:#abb5ad"></div>
<div class="m" style="left:353px;top:184px;color:#fff"><b>select</b> * <b>from</b> leg$eggl</div>
<div class="m" style="left:353px;top:216px">leg$eggl</div>
<!-- cursor -->
<svg style="left:355px;top:142px;width:16px;height:22px" viewBox="0 0 16 22"><path d="M1.500 1v17l4-4 3 7 3-1.500-3-6.500h6z" fill="#fff" stroke="#111"/></svg>
<!-- status 1 -->
<div style="left:320px;top:392px;width:647px;height:22px;background:#ece5ef"></div>
<div class="st" style="left:322px;top:393px;width:121px;text-align:center">1 <span style="position:static;color:#c87818">|</span> 1 : 22</div>
<div class="st" style="left:445px;top:393px;width:26px;padding-left:3px">INS</div>
<div class="st" style="left:472px;top:393px;width:29px;padding-left:2px">PC</div>
<div class="st" style="left:503px;top:393px;width:459px;padding-left:6px;letter-spacing:-.03px">[2/14/2013 11:34:22 AM] Script executed - No Errors [Time: 266ms]</div>
<div style="left:635px;top:411px;width:2px;height:2px;background:#445;box-shadow:4px 0 0 #445,8px 0 0 #445,12px 0 0 #445"></div>
<div style="left:320px;top:414px;width:647px;height:1px;background:#c8c8cc"></div>
<div style="left:320px;top:415px;width:647px;height:24px;background:#ece5ef"></div>
<div style="left:320px;top:437px;width:586px;height:2px;background:#a6c9ef"></div>
<!-- result tabs -->
<div class="tab" style="left:412px;top:417px;width:102px"></div><div class="tab" style="left:514px;top:417px;width:63px"></div><div class="tab" style="left:577px;top:417px;width:90px"></div><div class="tab" style="left:667px;top:417px;width:69px"></div><div class="tab" style="left:736px;top:417px;width:113px"></div><div class="tab" style="left:849px;top:417px;width:57px;border-right:0;border-radius:5px 0 0 0"></div>
<svg style="left:328px;top:417px;width:85px;height:22px" viewBox="0 0 85 22"><path d="M1 21L20 2q1-1 3-1h58q2 0 2 2v18" fill="#ece5ef" stroke="#2a3a98"/><path d="M14 14h68v7H8z" fill="#ccd8d8"/></svg>
<div style="left:320px;top:438px;width:647px;height:1px;background:#2a3a98"></div>
<svg class="i" style="left:354px;top:420px"><use href="#win"/></svg><div class="t" style="left:373px;top:419px;font-size:11.500px">Text</div>
<svg class="i" style="left:419px;top:420px"><use href="#wi2"/></svg><div class="t" style="left:438px;top:419px;font-size:11.500px">Text History</div>
<svg class="i" style="left:522px;top:420px"><use href="#wig"/></svg><div class="t" style="left:541px;top:419px;font-size:11.500px">Grid</div>
<svg class="i" style="left:586px;top:420px"><use href="#wip"/></svg><div class="t" style="left:605px;top:419px;font-size:11.500px">Pivot Grid</div>
<svg class="i" style="left:676px;top:420px"><use href="#wif"/></svg><div class="t" style="left:695px;top:419px;font-size:11.500px">Form</div>
<svg class="i" style="left:744px;top:420px"><use href="#wie"/></svg><div class="t" style="left:763px;top:419px;font-size:11.500px">Execution Plan</div>
<svg class="i" style="left:857px;top:420px"><use href="#wib"/></svg><div class="t" style="left:876px;top:419px;font-size:11.500px">Client</div>
<svg style="left:915px;top:420px;width:46px;height:13px" viewBox="0 0 46 13"><path d="M6 1.500L1.500 6.500 6 11.500z" fill="#fff" stroke="#111"/><path d="M18.500 1.500L23 6.500 18.500 11.500z" fill="#111" stroke="#111"/><rect x="32.500" y="1.500" width="8" height="10" fill="#fff" stroke="#111"/><path d="M34 4h5M34 6.500h5M34 9h5" stroke="#111"/></svg>
<!-- results -->
<div style="left:323px;top:439px;width:637px;height:183px;background:#fff"></div>
<div style="left:320px;top:439px;width:3px;height:183px;background:#a6c9ef"></div>
<div style="left:323px;top:439px;width:20px;height:183px;background:#ece5ef;border-right:1px solid #c8c8cc;box-sizing:border-box"></div>
<div style="left:915px;top:439px;width:1px;height:183px;background:#eee"></div>
<div style="left:932px;top:439px;width:28px;height:183px;background:#ece5ef"></div>
<div style="left:932px;top:441px;width:16px;height:180px;background:#fdf8ee"></div>
<div class="sb" style="left:932px;top:441px"></div><svg style="left:935px;top:444px;width:10px;height:8px" viewBox="0 0 10 8"><path d="M1 6l4-4 4 4" fill="none" stroke="#3a3a7a" stroke-width="2"/></svg>
<div style="left:933px;top:458px;width:14px;height:139px;background:linear-gradient(90deg,#c4d4dc 0 3px,#a6c9ef 3px);border:1px solid #e4e6f2;box-sizing:border-box"></div>
<div class="sb" style="left:932px;top:605px"></div><svg style="left:935px;top:609px;width:10px;height:8px" viewBox="0 0 10 8"><path d="M1 2l4 4 4-4" fill="none" stroke="#3a3a7a" stroke-width="2"/></svg>
<div style="left:951px;top:446px;width:7px;height:7px;background:#4caf5a"></div>
<div style="left:950px;top:461px;width:9px;height:1px;background:#555"></div><div style="left:953px;top:459px;width:3px;height:4px;background:#444"></div>
<div class="m" style="left:333px;top:441px">1</div><div class="m" style="left:333px;top:457px">2</div><div class="m" style="left:333px;top:473px">3</div><div class="m" style="left:333px;top:489px">4</div><div class="m" style="left:333px;top:505px">5</div><div class="m" style="left:333px;top:521px">6</div><div class="m" style="left:333px;top:537px">7</div><div class="m" style="left:333px;top:553px">8</div>
<div class="m" style="left:362px;top:441px">aaa</div><div class="m" style="left:362px;top:457px">------</div>
<div class="m" style="left:362px;top:489px">0 record(s) selected [Fetch MetaData: 0ms] [Fetch Data: 0ms]</div>
<div class="m" style="left:362px;top:521px">[Executed: 2/14/2013 11:34:22 AM] [Execution: 0ms]</div>
<!-- status 2 -->
<div class="st" style="left:323px;top:622px;width:122px"></div>
<div class="st" style="left:446px;top:622px;width:26px;padding-left:3px">INS</div>
<div class="st" style="left:473px;top:622px;width:30px;padding-left:2px">PC</div>
<div class="st" style="left:505px;top:622px;width:455px;padding-left:6px;letter-spacing:-.1px">1 Resultset(s) - 0 Total Row(s)</div>
<!-- detail -->
<svg class="i" style="left:974px;top:84px;width:14px;height:14px"><use href="#win"/></svg>
<div class="t" style="left:981px;top:100px;margin-top:0;transform-origin:0 0;transform:rotate(90deg) translate(0,-8px);color:#111">Detail</div>
<!-- bottom status -->
<div style="left:2px;top:646px;width:989px;height:19px;background:#ece5ef;border-top:1px solid #cfcad4;box-sizing:border-box"></div>
<div style="left:0;top:665px;width:996px;height:4px;background:linear-gradient(#5a70d4 0 3px,#3a4cb4 3px)"></div>
<div class="t" style="left:7px;top:648px;color:#222;letter-spacing:-.15px">Local Database Servers / NextGen Servers / MySQL / MySQL 5.5</div>
<div style="left:788px;top:647px;width:1px;height:18px;background:#aaa"></div>
<div style="left:791px;top:648px;width:31px;height:16px;background:#baaaa2"></div>
<div style="left:822px;top:648px;width:47px;height:16px;background:#ccd8d6"></div>
<div class="t" style="left:838px;top:648px;color:#222;letter-spacing:-.15px">148 : 367 : 849 MB</div>
<div style="left:972px;top:647px;width:1px;height:18px;background:#aaa"></div>
<svg class="i" style="left:975px;top:649px" viewBox="0 0 16 16"><path d="M1 2.500h12M5 2.500V1h4v1.500" fill="none" stroke="#222"/><path d="M2.500 3.500l1 11h7l1-11z" fill="#8a8a84" stroke="#222"/><path d="M5.500 5v8M7 5v8M8.500 5v8" stroke="#333"/></svg>
</div>
</body></html>
